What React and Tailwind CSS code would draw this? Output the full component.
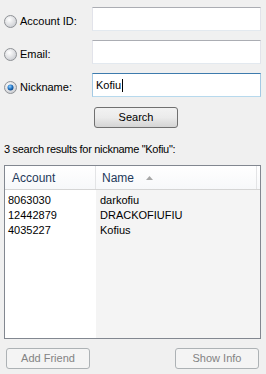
import React from 'react';

const Radio = ({ checked }) => (
    <svg width="13" height="13" viewBox="0 0 13 13" className="shrink-0">
        <defs>
            <radialGradient id={checked ? 'rc' : 'ru'} cx="0.4" cy="0.35" r="0.7">
                <stop offset="0" stopColor="#ffffff" />
                <stop offset="1" stopColor="#c9cbd0" />
            </radialGradient>
            <radialGradient id="dot" cx="0.4" cy="0.35" r="0.7">
                <stop offset="0" stopColor="#8fd0ff" />
                <stop offset="0.6" stopColor="#1d6fc0" />
                <stop offset="1" stopColor="#0b3f7a" />
            </radialGradient>
        </defs>
        <circle cx="6.5" cy="6.5" r="6" fill={`url(#${checked ? 'rc' : 'ru'})`} stroke="#8f9296" />
        {checked && <circle cx="6.5" cy="6.5" r="3" fill="url(#dot)" />}
    </svg>
);

const Field = ({ label, checked, value, focused }) => (
    <div className="flex items-center h-[24px]">
        <div className="flex items-center gap-[3px] pl-[4px] pt-[4px] w-[92px]">
            <Radio checked={checked} />
            <span className="text-[11px] text-black">{label}</span>
        </div>
        <div className={`w-[169px] h-[24px] bg-white border flex items-center px-[3px] ${focused ? 'border-t-[#3d7bad] border-x-[#a4c9e3] border-b-[#b7d9ed]' : 'border-t-[#abadb3] border-x-[#e2e3ea] border-b-[#e3e9ef]'}`}>
            {value && (
                <span className="text-[11px] text-black flex items-center">
                    {value}
                    <span className="inline-block w-px h-[13px] bg-black ml-px" />
                </span>
            )}
        </div>
    </div>
);

const Button = ({ children, disabled, className = '' }) => (
    <div
        className={`h-[21px] w-[84px] rounded-[3px] border flex items-center justify-center text-[11px] ${disabled ? 'border-[#adb2b5] bg-[#f4f4f4] text-[#838383]' : 'border-[#707070] bg-gradient-to-b from-[#f2f2f2] via-[#ebebeb] to-[#d4d4d4] text-black'} ${className}`}
    >
        {children}
    </div>
);

const rows = [
    { account: '8063030', name: 'darkofiu' },
    { account: '12442879', name: 'DRACKOFIUFIU' },
    { account: '4035227', name: 'Kofius' },
];

export default function App() {
    return (
        <div className="w-[266px] h-[374px] bg-[#f0f0f0] flex flex-col" style={{ fontFamily: '"Liberation Sans", Arial, sans-serif' }}>
            <div className="flex flex-col gap-[9px] pt-[7px]">
                <Field label="Account ID:" />
                <Field label="Email:" />
                <Field label="Nickname:" checked value="Kofiu" focused />
            </div>
            <Button className="mt-[10px] ml-[94px]">Search</Button>
            <div className="mt-[15px] ml-[4px] text-[11px] leading-[13px] tracking-[-0.3px] text-black">3 search results for nickname "Kofiu":</div>
            <div className="mt-[9px] mx-[4px] w-[257px] flex-1 border border-[#828790] bg-white flex flex-col overflow-hidden">
                <div className="flex h-[24px] border-b border-[#d5d5d5] bg-gradient-to-b from-white to-[#f7f8fa] text-[12px] text-[#1e395b]">
                    <div className="w-[91px] border-r border-[#e3e4e6] pl-[7px] flex items-center">Account</div>
                    <div className="flex-1 pl-[6px] flex items-center gap-[12px]">
                        Name
                        <svg width="7" height="4" viewBox="0 0 7 4"><path d="M0 4 L3.5 0 L7 4 Z" fill="#a7a7a7" /></svg>
                    </div>
                    <div className="w-[4px] border-l border-[#e3e4e6]" />
                </div>
                <div className="flex flex-1">
                    <div className="w-[91px] bg-white pt-[3px] pl-[3px]">
                        {rows.map((r) => (
                            <div key={r.account} className="h-[15px] text-[11px] leading-[15px] text-black">{r.account}</div>
                        ))}
                    </div>
                    <div className="flex-1 bg-[#f4f4f4] pt-[3px] pl-[4px]">
                        {rows.map((r) => (
                            <div key={r.account} className="h-[15px] text-[11px] leading-[15px] text-black">{r.name}</div>
                        ))}
                    </div>
                </div>
            </div>
            <div className="flex justify-between px-[6px] mt-[9px] mb-[5px]">
                <Button disabled>Add Friend</Button>
                <Button disabled className="mr-[1px]">Show Info</Button>
            </div>
        </div>
    );
}
